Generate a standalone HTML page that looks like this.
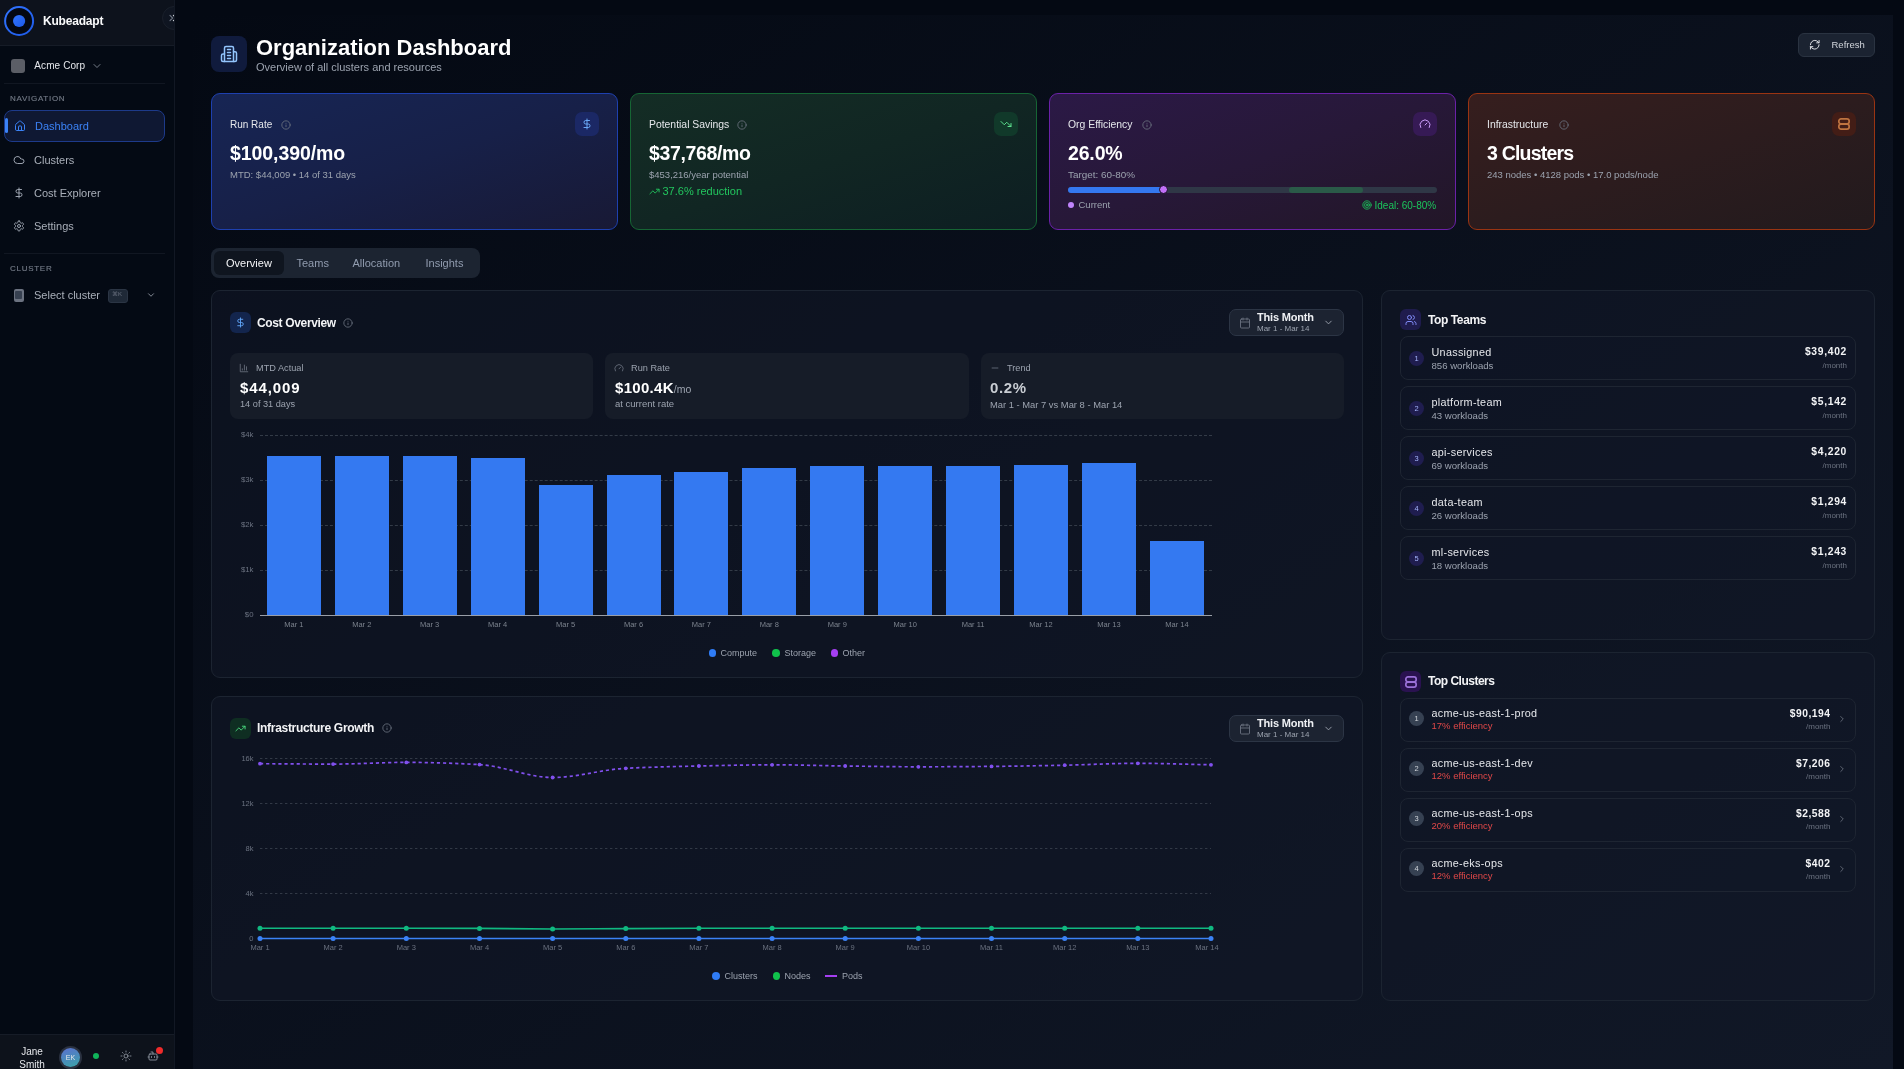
<!DOCTYPE html>
<html><head><meta charset="utf-8">
<style>
*{box-sizing:border-box;margin:0;padding:0}
html,body{width:1904px;height:1069px;overflow:hidden;background:#040913;font-family:"Liberation Sans",sans-serif;color:#f3f4f6}
.a{position:absolute}
.t{position:absolute;white-space:nowrap;line-height:1}
#wrap{position:absolute;left:0;top:0;width:1904px;height:1069px;will-change:transform}
svg.i{position:absolute;fill:none;stroke:currentColor;stroke-width:2;stroke-linecap:round;stroke-linejoin:round}
#sb{position:absolute;left:0;top:0;width:175px;height:1069px;background:#040a14;border-right:1px solid #121824;overflow:hidden;z-index:2}
#main{position:absolute;left:193px;top:15px;width:1700px;height:1054px;background:linear-gradient(to bottom right,#040913,#111827)}
.card{position:absolute;top:93px;width:407px;height:137px;border-radius:9px;border:1px solid}
.ibox{position:absolute;width:24px;height:24px;border-radius:7px}
.panel{position:absolute;background:rgba(17,24,39,0.5);border:1px solid #1c2431;border-radius:9px}
.sbox{position:absolute;top:353px;height:66px;background:#161c28;border-radius:8px}
.row{position:absolute;left:1400px;width:456px;height:44px;border:1px solid #1e2532;border-radius:8px;background:rgba(17,24,39,0.3)}
</style></head><body><div id="wrap">

<!-- SIDEBAR -->
<div id="sb">
  <div class="a" style="left:0;top:0;width:174px;height:46px;background:#0d121c;border-bottom:1px solid #161c27"></div>
  <svg class="a" style="left:0;top:0;width:40px;height:42px" viewBox="0 0 40 42"><defs><linearGradient id="lg" x1="0" y1="0" x2="1" y2="1"><stop offset="0" stop-color="#3274ff"/><stop offset="1" stop-color="#1d5ae8"/></linearGradient></defs><circle cx="19.1" cy="21" r="14" fill="#040812" stroke="url(#lg)" stroke-width="2"/><circle cx="19.1" cy="21" r="6.1" fill="url(#lg)"/></svg>
  <div class="t" style="left:43px;top:15px;font-size:12px;font-weight:700;letter-spacing:-0.2px;color:#f9fafb">Kubeadapt</div>
  <div class="a" style="left:162px;top:6px;width:24px;height:24px;border-radius:50%;background:#0f1521;border:1px solid #1a202b"></div>
  <svg class="a" style="left:160px;top:0;width:15px;height:35px" viewBox="160 0 15 35"><path d="M170 15.4 L172.6 18 L170 20.6" fill="none" stroke="#6b7280" stroke-width="1.2" stroke-linecap="round" stroke-linejoin="round"/><circle cx="173.6" cy="15.6" r="0.8" fill="#c8ccd2"/><circle cx="173.6" cy="20.5" r="0.8" fill="#c8ccd2"/></svg>
  <!-- org -->
  <div class="a" style="left:10.5px;top:58.5px;width:14px;height:14px;border-radius:3px;background:#5b5e66"></div>
  <div class="t" style="left:34.3px;top:61.3px;font-size:10px;letter-spacing:0.1px;color:#e5e7eb">Acme Corp</div>
  <svg class="i" style="left:90.7px;top:60.2px;width:12px;height:12px;color:#9ca3af;stroke-width:1.5" viewBox="0 0 24 24"><path d="m6 9 6 6 6-6"/></svg>
  <div class="a" style="left:4px;top:83px;width:161px;height:1px;background:#111722"></div>
  <div class="t" style="left:10px;top:95px;font-size:8px;font-weight:400;letter-spacing:0.72px;color:#737a86;-webkit-text-stroke:0.15px #737a86">NAVIGATION</div>
  <!-- nav -->
  <div class="a" style="left:4px;top:110px;width:161px;height:32px;border-radius:8px;background:#0f1833;border:1px solid #1d3a8a"></div>
  <div class="a" style="left:5px;top:118px;width:3px;height:15px;border-radius:2px;background:#3b82f6"></div>
  <svg class="i" style="left:13.5px;top:120px;width:12px;height:12px;color:#3b82f6" viewBox="0 0 24 24"><path d="M15 21v-8a1 1 0 0 0-1-1h-4a1 1 0 0 0-1 1v8"/><path d="M3 10a2 2 0 0 1 .709-1.528l7-5.999a2 2 0 0 1 2.582 0l7 5.999A2 2 0 0 1 21 10v9a2 2 0 0 1-2 2H5a2 2 0 0 1-2-2z"/></svg>
  <div class="t" style="left:35px;top:121px;font-size:11px;color:#3b82f6">Dashboard</div>
  <svg class="i" style="left:13px;top:154px;width:12px;height:12px;color:#9ca3af" viewBox="0 0 24 24"><path d="M17.5 19H9a7 7 0 1 1 6.71-9h1.79a4.5 4.5 0 1 1 0 9Z"/></svg>
  <div class="t" style="left:34px;top:155px;font-size:11px;color:#a9afb9">Clusters</div>
  <svg class="i" style="left:13px;top:187px;width:12px;height:12px;color:#9ca3af" viewBox="0 0 24 24"><line x1="12" x2="12" y1="2" y2="22"/><path d="M17 5H9.5a3.5 3.5 0 0 0 0 7h5a3.5 3.5 0 0 1 0 7H6"/></svg>
  <div class="t" style="left:34px;top:188px;font-size:11px;color:#a9afb9">Cost Explorer</div>
  <svg class="i" style="left:13px;top:220px;width:12px;height:12px;color:#9ca3af" viewBox="0 0 24 24"><path d="M12.22 2h-.44a2 2 0 0 0-2 2v.18a2 2 0 0 1-1 1.73l-.43.25a2 2 0 0 1-2 0l-.15-.08a2 2 0 0 0-2.73.73l-.22.38a2 2 0 0 0 .73 2.730l.15.1a2 2 0 0 1 1 1.72v.51a2 2 0 0 1-1 1.74l-.15.09a2 2 0 0 0-.73 2.73l.22.38a2 2 0 0 0 2.73.73l.15-.08a2 2 0 0 1 2 0l.43.25a2 2 0 0 1 1 1.73V20a2 2 0 0 0 2 2h.44a2 2 0 0 0 2-2v-.18a2 2 0 0 1 1-1.73l.43-.25a2 2 0 0 1 2 0l.15.08a2 2 0 0 0 2.73-.73l.22-.39a2 2 0 0 0-.73-2.73l-.15-.08a2 2 0 0 1-1-1.740v-.5a2 2 0 0 1 1-1.74l.15-.09a2 2 0 0 0 .73-2.73l-.22-.38a2 2 0 0 0-2.73-.73l-.15.08a2 2 0 0 1-2 0l-.43-.25a2 2 0 0 1-1-1.73V4a2 2 0 0 0-2-2z"/><circle cx="12" cy="12" r="3"/></svg>
  <div class="t" style="left:34px;top:221px;font-size:11px;color:#a9afb9">Settings</div>
  <div class="a" style="left:4px;top:253px;width:161px;height:1px;background:#111722"></div>
  <div class="t" style="left:10px;top:265px;font-size:8px;font-weight:400;letter-spacing:0.72px;color:#737a86;-webkit-text-stroke:0.15px #737a86">CLUSTER</div>
  <div class="a" style="left:13.5px;top:289px;width:10px;height:13px;border-radius:2px;background:#6b7280"></div>
  <div class="a" style="left:15px;top:291px;width:7px;height:8px;border-radius:1px;background:#374151"></div>
  <div class="t" style="left:34px;top:290px;font-size:11px;color:#a9afb9">Select cluster</div>
  <div class="a" style="left:108px;top:288.5px;width:20px;height:14px;border-radius:3px;background:#1f2937;border:1px solid #2b3544"></div>
  <div class="t" style="left:112px;top:291px;font-size:6px;color:#6b7280">&#8984;K</div>
  <svg class="i" style="left:146px;top:290px;width:10px;height:10px;color:#9ca3af" viewBox="0 0 24 24"><path d="m6 9 6 6 6-6"/></svg>
  <!-- bottom -->
  <div class="a" style="left:0;top:1034px;width:174px;height:35px;background:#0d121b;border-top:1px solid #161c27"></div>
  <div class="t" style="left:20px;top:1047.3px;font-size:10px;color:#e5e7eb;text-align:center;width:24px">Jane</div>
  <div class="t" style="left:14px;top:1060.3px;font-size:10px;color:#e5e7eb;text-align:center;width:36px">Smith</div>
  <div class="a" style="left:59px;top:1046px;width:23px;height:23px;border-radius:50%;background:#2a3140"></div>
  <div class="a" style="left:61px;top:1048px;width:19px;height:19px;border-radius:50%;background:linear-gradient(160deg,#5b6fd0,#3aa5a8);"></div>
  <div class="t" style="left:61px;top:1054px;width:19px;text-align:center;font-size:7px;color:#e5e7eb">EK</div>
  <div class="a" style="left:93px;top:1053px;width:6px;height:6px;border-radius:50%;background:#10b45a"></div>
  <svg class="i" style="left:120px;top:1050px;width:12px;height:12px;color:#9ca3af;stroke-width:1.6" viewBox="0 0 24 24"><circle cx="12" cy="12" r="4"/><path d="M12 2v2"/><path d="M12 20v2"/><path d="m4.93 4.93 1.41 1.41"/><path d="m17.66 17.66 1.41 1.41"/><path d="M2 12h2"/><path d="M20 12h2"/><path d="m6.34 17.66-1.41 1.41"/><path d="m19.07 4.93-1.41 1.41"/></svg>
  <svg class="i" style="left:147px;top:1050px;width:12px;height:12px;color:#9ca3af;stroke-width:1.6" viewBox="0 0 24 24"><path d="M12 8V4H8"/><rect width="16" height="12" x="4" y="8" rx="2"/><path d="M2 14h2"/><path d="M20 14h2"/><path d="M15 13v2"/><path d="M9 13v2"/></svg>
  <div class="a" style="left:155.5px;top:1046.5px;width:7px;height:7px;border-radius:50%;background:#ef2b2b"></div>
</div>

<div id="main"></div>

<!-- HEADER -->
<div class="a" style="left:211px;top:36px;width:36px;height:36px;border-radius:8px;background:#101b3d"></div>
<svg class="i" style="left:220px;top:45px;width:18px;height:18px;color:#93c5fd" viewBox="0 0 24 24"><path d="M6 22V4a2 2 0 0 1 2-2h8a2 2 0 0 1 2 2v18Z"/><path d="M6 12H4a2 2 0 0 0-2 2v6a2 2 0 0 0 2 2h2"/><path d="M18 9h2a2 2 0 0 1 2 2v9a2 2 0 0 1-2 2h-2"/><path d="M10 6h4"/><path d="M10 10h4"/><path d="M10 14h4"/><path d="M10 18h4"/></svg>
<div class="t" style="left:256px;top:37px;font-size:22px;font-weight:700;color:#fff">Organization Dashboard</div>
<div class="t" style="left:256px;top:62px;font-size:11px;color:#9ca3af">Overview of all clusters and resources</div>
<div class="a" style="left:1798px;top:33px;width:77px;height:24px;border-radius:6px;background:#1b2331;border:1px solid #2a3341"></div>
<svg class="i" style="left:1808.5px;top:39.3px;width:11.5px;height:11.5px;color:#e5e7eb" viewBox="0 0 24 24"><path d="M3 12a9 9 0 0 1 9-9 9.75 9.75 0 0 1 6.74 2.74L21 8"/><path d="M21 3v5h-5"/><path d="M21 12a9 9 0 0 1-9 9 9.75 9.75 0 0 1-6.74-2.74L3 16"/><path d="M8 16H3v5"/></svg>
<div class="t" style="left:1831.5px;top:40.2px;font-size:9.5px;color:#d1d5db">Refresh</div>

<!-- STAT CARDS -->
<div class="card" style="left:211px;border-color:#1e40af;background:linear-gradient(to bottom right,#172554 0%,#172048 50%,#181935 100%)"></div>
<div class="card" style="left:630px;border-color:#166534;background:linear-gradient(to bottom right,#142d25 0%,#112623 50%,#0d1e22 100%)"></div>
<div class="card" style="left:1049px;border-color:#6b21a8;background:linear-gradient(to bottom right,#2b1946 0%,#271838 50%,#221627 100%)"></div>
<div class="card" style="left:1468px;border-color:#9a3412;background:linear-gradient(to bottom right,#361e1e 0%,#2c1c1e 50%,#221a1d 100%)"></div>

<!-- card1 -->
<div class="t" style="left:230px;top:120.2px;font-size:10px;color:#e5e7eb">Run Rate</div>
<svg class="i" style="left:280.5px;top:119.5px;width:10px;height:10px;color:#6b7280;stroke-width:2" viewBox="0 0 24 24"><circle cx="12" cy="12" r="10"/><path d="M12 16v-4"/><path d="M12 8h.01"/></svg>
<div class="ibox" style="left:575px;top:112px;background:#1b2865"></div>
<svg class="i" style="left:581px;top:118px;width:12px;height:12px;color:#6aa8f7" viewBox="0 0 24 24"><line x1="12" x2="12" y1="2" y2="22"/><path d="M17 5H9.5a3.5 3.5 0 0 0 0 7h5a3.5 3.5 0 0 1 0 7H6"/></svg>
<div class="t" style="left:230px;top:144.2px;font-size:19.5px;font-weight:700;letter-spacing:-0.08px;color:#fff">$100,390/mo</div>
<div class="t" style="left:230px;top:170.2px;font-size:9.5px;color:#9ca3af">MTD: $44,009 &#8226; 14 of 31 days</div>
<!-- card2 -->
<div class="t" style="left:649px;top:120.2px;font-size:10.4px;color:#e5e7eb">Potential Savings</div>
<svg class="i" style="left:737px;top:119.5px;width:10px;height:10px;color:#6b7280;stroke-width:2" viewBox="0 0 24 24"><circle cx="12" cy="12" r="10"/><path d="M12 16v-4"/><path d="M12 8h.01"/></svg>
<div class="ibox" style="left:994px;top:112px;background:#11392a"></div>
<svg class="i" style="left:1000px;top:118px;width:12px;height:12px;color:#5ee08f" viewBox="0 0 24 24"><polyline points="22 17 13.5 8.5 8.5 13.5 2 7"/><polyline points="16 17 22 17 22 11"/></svg>
<div class="t" style="left:649px;top:144.2px;font-size:19.5px;font-weight:700;letter-spacing:-0.36px;color:#fff">$37,768/mo</div>
<div class="t" style="left:649px;top:170.2px;font-size:9.5px;color:#9ca3af">$453,216/year potential</div>
<svg class="i" style="left:649px;top:186px;width:11px;height:11px;color:#22c55e" viewBox="0 0 24 24"><polyline points="22 7 13.5 15.5 8.5 10.5 2 17"/><polyline points="16 7 22 7 22 13"/></svg>
<div class="t" style="left:662.5px;top:186.1px;font-size:11px;color:#22c55e">37.6% reduction</div>
<!-- card3 -->
<div class="t" style="left:1068px;top:120.2px;font-size:10.4px;color:#e5e7eb">Org Efficiency</div>
<svg class="i" style="left:1142px;top:119.5px;width:10px;height:10px;color:#6b7280;stroke-width:2" viewBox="0 0 24 24"><circle cx="12" cy="12" r="10"/><path d="M12 16v-4"/><path d="M12 8h.01"/></svg>
<div class="ibox" style="left:1413px;top:112px;background:#361a55"></div>
<svg class="i" style="left:1419px;top:118px;width:12px;height:12px;color:#c99af7" viewBox="0 0 24 24"><path d="m12 14 4-4"/><path d="M3.34 19a10 10 0 1 1 17.32 0"/></svg>
<div class="t" style="left:1068px;top:144.2px;font-size:19.5px;font-weight:700;letter-spacing:-0.16px;color:#fff">26.0%</div>
<div class="t" style="left:1068px;top:170.2px;font-size:9.9px;color:#9ca3af">Target: 60-80%</div>
<div class="a" style="left:1068px;top:187px;width:369px;height:6px;border-radius:3px;background:#2f3746"></div>
<div class="a" style="left:1289px;top:187px;width:74px;height:6px;border-radius:3px;background:#2a5a48"></div>
<div class="a" style="left:1068px;top:187px;width:95px;height:6px;border-radius:3px;background:#3478f0"></div>
<div class="a" style="left:1158.8px;top:185.4px;width:9px;height:9px;border-radius:50%;background:#c270f7;border:1px solid #140b20"></div>
<div class="a" style="left:1068px;top:202px;width:6px;height:6px;border-radius:50%;background:#c084fc"></div>
<div class="t" style="left:1078.5px;top:200.2px;font-size:9.5px;color:#9ca3af">Current</div>
<svg class="i" style="left:1362.2px;top:200.2px;width:10px;height:10px;color:#1bc45c" viewBox="0 0 24 24"><circle cx="12" cy="12" r="10"/><circle cx="12" cy="12" r="6"/><circle cx="12" cy="12" r="2"/></svg>
<div class="t" style="left:1374.5px;top:200.8px;font-size:10px;color:#1bc45c">Ideal: 60-80%</div>
<!-- card4 -->
<div class="t" style="left:1487px;top:120.2px;font-size:10.4px;color:#e5e7eb">Infrastructure</div>
<svg class="i" style="left:1559px;top:119.5px;width:10px;height:10px;color:#6b7280;stroke-width:2" viewBox="0 0 24 24"><circle cx="12" cy="12" r="10"/><path d="M12 16v-4"/><path d="M12 8h.01"/></svg>
<div class="ibox" style="left:1832px;top:112px;background:#431d16"></div>
<svg class="i" style="left:1838px;top:118px;width:12px;height:12px;color:#bf7440;stroke-width:1.7" viewBox="0 0 12 12"><rect x="0.85" y="0.85" width="10.3" height="5" rx="2.2"/><rect x="0.85" y="6.15" width="10.3" height="5" rx="2.2"/></svg>
<div class="t" style="left:1487px;top:144.2px;font-size:19.5px;font-weight:700;color:#fff;letter-spacing:-0.8px">3 Clusters</div>
<div class="t" style="left:1487px;top:170.2px;font-size:9.5px;color:#9ca3af">243 nodes &#8226; 4128 pods &#8226; 17.0 pods/node</div>

<!-- TABS -->
<div class="a" style="left:211px;top:248px;width:269px;height:30px;border-radius:8px;background:#1c2431"></div>
<div class="a" style="left:214px;top:251px;width:70px;height:24px;border-radius:6px;background:#0f151f"></div>
<div class="t" style="left:226px;top:258px;font-size:11px;color:#f3f4f6">Overview</div>
<div class="t" style="left:296.5px;top:258px;font-size:11px;color:#919caf">Teams</div>
<div class="t" style="left:352.5px;top:258px;font-size:11px;color:#919caf">Allocation</div>
<div class="t" style="left:425.5px;top:258px;font-size:11px;color:#919caf">Insights</div>

<!-- COST OVERVIEW -->
<div class="panel" style="left:211px;top:290px;width:1152px;height:388px"></div>
<div class="a" style="left:230px;top:312px;width:21px;height:21px;border-radius:6px;background:#13254d"></div>
<svg class="i" style="left:235px;top:317px;width:11px;height:11px;color:#60a5fa" viewBox="0 0 24 24"><line x1="12" x2="12" y1="2" y2="22"/><path d="M17 5H9.5a3.5 3.5 0 0 0 0 7h5a3.5 3.5 0 0 1 0 7H6"/></svg>
<div class="t" style="left:257px;top:316.8px;font-size:12px;font-weight:700;letter-spacing:-0.35px;color:#f3f4f6">Cost Overview</div>
<svg class="i" style="left:343px;top:317.5px;width:10px;height:10px;color:#6b7280" viewBox="0 0 24 24"><circle cx="12" cy="12" r="10"/><path d="M12 16v-4"/><path d="M12 8h.01"/></svg><div class="a" style="left:1229px;top:309px;width:115px;height:27px;border-radius:7px;background:#1c2331;border:1px solid #2c3545"></div>
<svg class="i" style="left:1239px;top:317px;width:12px;height:12px;color:#6b7280;stroke-width:1.8" viewBox="0 0 24 24"><rect width="18" height="18" x="3" y="4" rx="2" ry="2"/><line x1="16" x2="16" y1="2" y2="6"/><line x1="8" x2="8" y1="2" y2="6"/><line x1="3" x2="21" y1="10" y2="10"/></svg>
<div class="t" style="left:1257px;top:312.2px;font-size:11px;font-weight:700;letter-spacing:-0.2px;color:#eef0f3">This Month</div>
<div class="t" style="left:1257px;top:324.5px;font-size:8px;color:#9ca3af">Mar 1 - Mar 14</div>
<svg class="i" style="left:1322.5px;top:317px;width:11px;height:11px;color:#9ca3af" viewBox="0 0 24 24"><path d="m6 9 6 6 6-6"/></svg>

<div class="sbox" style="left:230px;width:363px"></div>
<div class="sbox" style="left:605px;width:364px"></div>
<div class="sbox" style="left:981px;width:363px"></div>
<svg class="i" style="left:239px;top:362.5px;width:10px;height:10px;color:#6b7280" viewBox="0 0 24 24"><path d="M3 3v18h18"/><path d="M18 17V9"/><path d="M13 17V5"/><path d="M8 17v-3"/></svg>
<div class="t" style="left:256px;top:363.5px;font-size:9.2px;color:#9ca3af">MTD Actual</div>
<div class="t" style="left:240px;top:380.2px;font-size:15px;font-weight:700;letter-spacing:0.9px;color:#fff">$44,009</div>
<div class="t" style="left:240px;top:399.5px;font-size:9.2px;color:#9ca3af">14 of 31 days</div>
<svg class="i" style="left:614px;top:362.5px;width:10px;height:10px;color:#6b7280" viewBox="0 0 24 24"><path d="m12 14 4-4"/><path d="M3.34 19a10 10 0 1 1 17.32 0"/></svg>
<div class="t" style="left:631px;top:363.5px;font-size:9.2px;color:#9ca3af">Run Rate</div>
<div class="t" style="left:615px;top:380.2px;font-size:15px;font-weight:700;letter-spacing:0.3px;color:#fff">$100.4K<span style="font-size:10.5px;font-weight:400;color:#9ca3af;letter-spacing:0">/mo</span></div>
<div class="t" style="left:615px;top:398.7px;font-size:9.5px;color:#9ca3af">at current rate</div>
<svg class="i" style="left:990px;top:362.5px;width:10px;height:10px;color:#6b7280" viewBox="0 0 24 24"><path d="M5 12h14"/></svg>
<div class="t" style="left:1007px;top:363.5px;font-size:9.2px;color:#9ca3af">Trend</div>
<div class="t" style="left:990px;top:380.2px;font-size:15px;font-weight:700;letter-spacing:0.6px;color:#c9cdd3">0.2%</div>
<div class="t" style="left:990px;top:399.5px;font-size:9.4px;color:#9ca3af">Mar 1 - Mar 7 vs Mar 8 - Mar 14</div>
<div class="a" style="left:260px;top:435px;width:952px;height:0;border-top:1px dashed #333b47"></div>
<div class="a" style="left:260px;top:480px;width:952px;height:0;border-top:1px dashed #333b47"></div>
<div class="a" style="left:260px;top:525px;width:952px;height:0;border-top:1px dashed #333b47"></div>
<div class="a" style="left:260px;top:570px;width:952px;height:0;border-top:1px dashed #333b47"></div>
<div class="t" style="left:203px;top:431.4px;width:50.5px;text-align:right;font-size:7.8px;color:#6b7280">$4k</div>
<div class="t" style="left:203px;top:476.4px;width:50.5px;text-align:right;font-size:7.8px;color:#6b7280">$3k</div>
<div class="t" style="left:203px;top:521.4px;width:50.5px;text-align:right;font-size:7.8px;color:#6b7280">$2k</div>
<div class="t" style="left:203px;top:566.4px;width:50.5px;text-align:right;font-size:7.8px;color:#6b7280">$1k</div>
<div class="t" style="left:203px;top:611.4px;width:50.5px;text-align:right;font-size:7.8px;color:#6b7280">$0</div>
<div class="a" style="left:266.9px;top:456px;width:54px;height:159px;background:#3479f1"></div>
<div class="t" style="left:243.9px;top:620.8px;width:100px;text-align:center;font-size:7.5px;color:#7c838e">Mar 1</div>
<div class="a" style="left:334.8px;top:455.7px;width:54px;height:159.3px;background:#3479f1"></div>
<div class="t" style="left:311.8px;top:620.8px;width:100px;text-align:center;font-size:7.5px;color:#7c838e">Mar 2</div>
<div class="a" style="left:402.7px;top:455.5px;width:54px;height:159.5px;background:#3479f1"></div>
<div class="t" style="left:379.7px;top:620.8px;width:100px;text-align:center;font-size:7.5px;color:#7c838e">Mar 3</div>
<div class="a" style="left:470.7px;top:458px;width:54px;height:157px;background:#3479f1"></div>
<div class="t" style="left:447.7px;top:620.8px;width:100px;text-align:center;font-size:7.5px;color:#7c838e">Mar 4</div>
<div class="a" style="left:538.6px;top:485.2px;width:54px;height:129.8px;background:#3479f1"></div>
<div class="t" style="left:515.6px;top:620.8px;width:100px;text-align:center;font-size:7.5px;color:#7c838e">Mar 5</div>
<div class="a" style="left:606.5px;top:474.5px;width:54px;height:140.5px;background:#3479f1"></div>
<div class="t" style="left:583.5px;top:620.8px;width:100px;text-align:center;font-size:7.5px;color:#7c838e">Mar 6</div>
<div class="a" style="left:674.4px;top:471.6px;width:54px;height:143.39999999999998px;background:#3479f1"></div>
<div class="t" style="left:651.4px;top:620.8px;width:100px;text-align:center;font-size:7.5px;color:#7c838e">Mar 7</div>
<div class="a" style="left:742.3px;top:468.2px;width:54px;height:146.8px;background:#3479f1"></div>
<div class="t" style="left:719.3px;top:620.8px;width:100px;text-align:center;font-size:7.5px;color:#7c838e">Mar 8</div>
<div class="a" style="left:810.3px;top:466.4px;width:54px;height:148.60000000000002px;background:#3479f1"></div>
<div class="t" style="left:787.3px;top:620.8px;width:100px;text-align:center;font-size:7.5px;color:#7c838e">Mar 9</div>
<div class="a" style="left:878.2px;top:465.5px;width:54px;height:149.5px;background:#3479f1"></div>
<div class="t" style="left:855.2px;top:620.8px;width:100px;text-align:center;font-size:7.5px;color:#7c838e">Mar 10</div>
<div class="a" style="left:946.1px;top:466.4px;width:54px;height:148.60000000000002px;background:#3479f1"></div>
<div class="t" style="left:923.1px;top:620.8px;width:100px;text-align:center;font-size:7.5px;color:#7c838e">Mar 11</div>
<div class="a" style="left:1014.0px;top:465.2px;width:54px;height:149.8px;background:#3479f1"></div>
<div class="t" style="left:991.0px;top:620.8px;width:100px;text-align:center;font-size:7.5px;color:#7c838e">Mar 12</div>
<div class="a" style="left:1081.9px;top:462.6px;width:54px;height:152.39999999999998px;background:#3479f1"></div>
<div class="t" style="left:1058.9px;top:620.8px;width:100px;text-align:center;font-size:7.5px;color:#7c838e">Mar 13</div>
<div class="a" style="left:1149.9px;top:540.9px;width:54px;height:74.10000000000002px;background:#3479f1"></div>
<div class="t" style="left:1126.9px;top:620.8px;width:100px;text-align:center;font-size:7.5px;color:#7c838e">Mar 14</div>
<div class="a" style="left:260px;top:614.5px;width:952px;height:1px;background:rgba(200,205,212,0.75)"></div>
<div class="a" style="left:708.6px;top:649.4px;width:7.6px;height:7.6px;border-radius:50%;background:#2f7cf6"></div>
<div class="t" style="left:720.5px;top:649.2px;font-size:9px;color:#9ca3af">Compute</div>
<div class="a" style="left:772.4px;top:649.4px;width:7.6px;height:7.6px;border-radius:50%;background:#10c24b"></div>
<div class="t" style="left:784.5px;top:649.2px;font-size:9px;color:#9ca3af">Storage</div>
<div class="a" style="left:830.7px;top:649.4px;width:7.6px;height:7.6px;border-radius:50%;background:#a53ff2"></div>
<div class="t" style="left:842.5px;top:649.2px;font-size:9px;color:#9ca3af">Other</div>

<!-- INFRA GROWTH -->
<div class="panel" style="left:211px;top:696px;width:1152px;height:305px"></div>
<div class="a" style="left:230px;top:718px;width:21px;height:21px;border-radius:6px;background:#0f2e22"></div>
<svg class="i" style="left:235px;top:723px;width:11px;height:11px;color:#4ade80" viewBox="0 0 24 24"><polyline points="22 7 13.5 15.5 8.5 10.5 2 17"/><polyline points="16 7 22 7 22 13"/></svg>
<div class="t" style="left:257px;top:722.2px;font-size:12px;font-weight:700;letter-spacing:-0.3px;color:#f3f4f6">Infrastructure Growth</div>
<svg class="i" style="left:382px;top:723px;width:10px;height:10px;color:#6b7280" viewBox="0 0 24 24"><circle cx="12" cy="12" r="10"/><path d="M12 16v-4"/><path d="M12 8h.01"/></svg><div class="a" style="left:1229px;top:715px;width:115px;height:27px;border-radius:7px;background:#1c2331;border:1px solid #2c3545"></div>
<svg class="i" style="left:1239px;top:723px;width:12px;height:12px;color:#6b7280;stroke-width:1.8" viewBox="0 0 24 24"><rect width="18" height="18" x="3" y="4" rx="2" ry="2"/><line x1="16" x2="16" y1="2" y2="6"/><line x1="8" x2="8" y1="2" y2="6"/><line x1="3" x2="21" y1="10" y2="10"/></svg>
<div class="t" style="left:1257px;top:718.2px;font-size:11px;font-weight:700;letter-spacing:-0.2px;color:#eef0f3">This Month</div>
<div class="t" style="left:1257px;top:730.5px;font-size:8px;color:#9ca3af">Mar 1 - Mar 14</div>
<svg class="i" style="left:1322.5px;top:723px;width:11px;height:11px;color:#9ca3af" viewBox="0 0 24 24"><path d="m6 9 6 6 6-6"/></svg>
<svg class="a" style="left:0;top:0;width:1904px;height:1069px;overflow:visible" viewBox="0 0 1904 1069">
<line x1="260" x2="1211" y1="758.5" y2="758.5" stroke="#323946" stroke-width="1" stroke-dasharray="2.4 2.6"/>
<line x1="260" x2="1211" y1="803.5" y2="803.5" stroke="#323946" stroke-width="1" stroke-dasharray="2.4 2.6"/>
<line x1="260" x2="1211" y1="848.5" y2="848.5" stroke="#323946" stroke-width="1" stroke-dasharray="2.4 2.6"/>
<line x1="260" x2="1211" y1="893.5" y2="893.5" stroke="#323946" stroke-width="1" stroke-dasharray="2.4 2.6"/>
<path d="M260.0,763.7 C284.4,763.8 308.8,764.1 333.1,764.1 C357.5,764.1 381.9,762.4 406.3,762.4 C430.7,762.4 455.1,763.3 479.5,764.6 C503.8,765.9 528.2,777.5 552.6,777.5 C577.0,777.5 601.4,769.5 625.8,768.3 C650.1,767.1 674.5,766.5 698.9,766.0 C723.3,765.5 747.7,764.8 772.1,764.8 C796.4,764.8 820.8,765.7 845.2,766.0 C869.6,766.3 894.0,766.8 918.4,766.8 C942.7,766.8 967.1,766.6 991.5,766.4 C1015.9,766.2 1040.3,765.7 1064.7,765.2 C1089.0,764.7 1113.4,763.3 1137.8,763.3 C1162.2,763.3 1186.6,764.3 1211.0,764.8" fill="none" stroke="#8150ee" stroke-width="1.7" stroke-dasharray="3.2 2.9"/>
<path d="M260.0,928.2 C284.4,928.2 308.8,928.2 333.1,928.2 C357.5,928.2 381.9,928.2 406.3,928.2 C430.7,928.2 455.1,928.3 479.5,928.4 C503.8,928.5 528.2,929.0 552.6,929.0 C577.0,929.0 601.4,928.7 625.8,928.6 C650.1,928.5 674.5,928.2 698.9,928.2 C723.3,928.2 747.7,928.2 772.1,928.2 C796.4,928.2 820.8,928.2 845.2,928.2 C869.6,928.2 894.0,928.2 918.4,928.2 C942.7,928.2 967.1,928.2 991.5,928.2 C1015.9,928.2 1040.3,928.2 1064.7,928.2 C1089.0,928.2 1113.4,928.2 1137.8,928.2 C1162.2,928.2 1186.6,928.2 1211.0,928.2" fill="none" stroke="#10b981" stroke-width="1.6"/>
<path d="M260.0,938.5 C284.4,938.5 308.8,938.5 333.1,938.5 C357.5,938.5 381.9,938.5 406.3,938.5 C430.7,938.5 455.1,938.5 479.5,938.5 C503.8,938.5 528.2,938.5 552.6,938.5 C577.0,938.5 601.4,938.5 625.8,938.5 C650.1,938.5 674.5,938.5 698.9,938.5 C723.3,938.5 747.7,938.5 772.1,938.5 C796.4,938.5 820.8,938.5 845.2,938.5 C869.6,938.5 894.0,938.5 918.4,938.5 C942.7,938.5 967.1,938.5 991.5,938.5 C1015.9,938.5 1040.3,938.5 1064.7,938.5 C1089.0,938.5 1113.4,938.5 1137.8,938.5 C1162.2,938.5 1186.6,938.5 1211.0,938.5" fill="none" stroke="#3b82f6" stroke-width="1.6"/>
<circle cx="260.0" cy="763.7" r="1.9" fill="#8150ee"/><circle cx="260.0" cy="928.2" r="2.5" fill="#10b981"/><circle cx="260.0" cy="938.5" r="2.5" fill="#3b82f6"/>
<circle cx="333.1" cy="764.1" r="1.9" fill="#8150ee"/><circle cx="333.1" cy="928.2" r="2.5" fill="#10b981"/><circle cx="333.1" cy="938.5" r="2.5" fill="#3b82f6"/>
<circle cx="406.3" cy="762.4" r="1.9" fill="#8150ee"/><circle cx="406.3" cy="928.2" r="2.5" fill="#10b981"/><circle cx="406.3" cy="938.5" r="2.5" fill="#3b82f6"/>
<circle cx="479.5" cy="764.6" r="1.9" fill="#8150ee"/><circle cx="479.5" cy="928.4" r="2.5" fill="#10b981"/><circle cx="479.5" cy="938.5" r="2.5" fill="#3b82f6"/>
<circle cx="552.6" cy="777.5" r="1.9" fill="#8150ee"/><circle cx="552.6" cy="929.0" r="2.5" fill="#10b981"/><circle cx="552.6" cy="938.5" r="2.5" fill="#3b82f6"/>
<circle cx="625.8" cy="768.3" r="1.9" fill="#8150ee"/><circle cx="625.8" cy="928.6" r="2.5" fill="#10b981"/><circle cx="625.8" cy="938.5" r="2.5" fill="#3b82f6"/>
<circle cx="698.9" cy="766" r="1.9" fill="#8150ee"/><circle cx="698.9" cy="928.2" r="2.5" fill="#10b981"/><circle cx="698.9" cy="938.5" r="2.5" fill="#3b82f6"/>
<circle cx="772.1" cy="764.8" r="1.9" fill="#8150ee"/><circle cx="772.1" cy="928.2" r="2.5" fill="#10b981"/><circle cx="772.1" cy="938.5" r="2.5" fill="#3b82f6"/>
<circle cx="845.2" cy="766" r="1.9" fill="#8150ee"/><circle cx="845.2" cy="928.2" r="2.5" fill="#10b981"/><circle cx="845.2" cy="938.5" r="2.5" fill="#3b82f6"/>
<circle cx="918.4" cy="766.8" r="1.9" fill="#8150ee"/><circle cx="918.4" cy="928.2" r="2.5" fill="#10b981"/><circle cx="918.4" cy="938.5" r="2.5" fill="#3b82f6"/>
<circle cx="991.5" cy="766.4" r="1.9" fill="#8150ee"/><circle cx="991.5" cy="928.2" r="2.5" fill="#10b981"/><circle cx="991.5" cy="938.5" r="2.5" fill="#3b82f6"/>
<circle cx="1064.7" cy="765.2" r="1.9" fill="#8150ee"/><circle cx="1064.7" cy="928.2" r="2.5" fill="#10b981"/><circle cx="1064.7" cy="938.5" r="2.5" fill="#3b82f6"/>
<circle cx="1137.8" cy="763.3" r="1.9" fill="#8150ee"/><circle cx="1137.8" cy="928.2" r="2.5" fill="#10b981"/><circle cx="1137.8" cy="938.5" r="2.5" fill="#3b82f6"/>
<circle cx="1211.0" cy="764.8" r="1.9" fill="#8150ee"/><circle cx="1211.0" cy="928.2" r="2.5" fill="#10b981"/><circle cx="1211.0" cy="938.5" r="2.5" fill="#3b82f6"/>
</svg>
<div class="t" style="left:203px;top:754.9px;width:50.5px;text-align:right;font-size:7.5px;color:#6b7280">16k</div>
<div class="t" style="left:203px;top:799.9px;width:50.5px;text-align:right;font-size:7.5px;color:#6b7280">12k</div>
<div class="t" style="left:203px;top:844.9px;width:50.5px;text-align:right;font-size:7.5px;color:#6b7280">8k</div>
<div class="t" style="left:203px;top:889.9px;width:50.5px;text-align:right;font-size:7.5px;color:#6b7280">4k</div>
<div class="t" style="left:203px;top:934.9px;width:50.5px;text-align:right;font-size:7.5px;color:#6b7280">0</div>
<div class="t" style="left:210.0px;top:943.8px;width:100px;text-align:center;font-size:7.5px;color:#6b7280">Mar 1</div>
<div class="t" style="left:283.1px;top:943.8px;width:100px;text-align:center;font-size:7.5px;color:#6b7280">Mar 2</div>
<div class="t" style="left:356.3px;top:943.8px;width:100px;text-align:center;font-size:7.5px;color:#6b7280">Mar 3</div>
<div class="t" style="left:429.5px;top:943.8px;width:100px;text-align:center;font-size:7.5px;color:#6b7280">Mar 4</div>
<div class="t" style="left:502.6px;top:943.8px;width:100px;text-align:center;font-size:7.5px;color:#6b7280">Mar 5</div>
<div class="t" style="left:575.8px;top:943.8px;width:100px;text-align:center;font-size:7.5px;color:#6b7280">Mar 6</div>
<div class="t" style="left:648.9px;top:943.8px;width:100px;text-align:center;font-size:7.5px;color:#6b7280">Mar 7</div>
<div class="t" style="left:722.1px;top:943.8px;width:100px;text-align:center;font-size:7.5px;color:#6b7280">Mar 8</div>
<div class="t" style="left:795.2px;top:943.8px;width:100px;text-align:center;font-size:7.5px;color:#6b7280">Mar 9</div>
<div class="t" style="left:868.4px;top:943.8px;width:100px;text-align:center;font-size:7.5px;color:#6b7280">Mar 10</div>
<div class="t" style="left:941.5px;top:943.8px;width:100px;text-align:center;font-size:7.5px;color:#6b7280">Mar 11</div>
<div class="t" style="left:1014.7px;top:943.8px;width:100px;text-align:center;font-size:7.5px;color:#6b7280">Mar 12</div>
<div class="t" style="left:1087.8px;top:943.8px;width:100px;text-align:center;font-size:7.5px;color:#6b7280">Mar 13</div>
<div class="t" style="left:1157.0px;top:943.8px;width:100px;text-align:center;font-size:7.5px;color:#6b7280">Mar 14</div>
<div class="a" style="left:711.8px;top:972.2px;width:8px;height:8px;border-radius:50%;background:#2f7cf6"></div>
<div class="t" style="left:724.4px;top:971.7px;font-size:9px;color:#9ca3af">Clusters</div>
<div class="a" style="left:772.6px;top:972.2px;width:7.6px;height:8px;border-radius:50%;background:#10c24b"></div>
<div class="t" style="left:784.6px;top:971.7px;font-size:9px;color:#9ca3af">Nodes</div>
<div class="a" style="left:825px;top:975px;width:12px;height:2px;background:#a53ff2"></div>
<div class="t" style="left:842.1px;top:971.7px;font-size:9px;color:#9ca3af">Pods</div>

<!-- TOP TEAMS -->
<div class="panel" style="left:1381px;top:290px;width:494px;height:350px"></div>
<div class="a" style="left:1400px;top:309px;width:21px;height:21px;border-radius:6px;background:#1f1c4d"></div>
<svg class="i" style="left:1404.5px;top:313.5px;width:12px;height:12px;color:#818cf8" viewBox="0 0 24 24"><path d="M16 21v-2a4 4 0 0 0-4-4H6a4 4 0 0 0-4 4v2"/><circle cx="9" cy="7" r="4"/><path d="M22 21v-2a4 4 0 0 0-3-3.87"/><path d="M16 3.13a4 4 0 0 1 0 7.75"/></svg>
<div class="t" style="left:1428px;top:313.7px;font-size:12px;font-weight:700;letter-spacing:-0.4px;color:#f3f4f6">Top Teams</div>
<div class="row" style="top:336px"></div>
<div class="a" style="left:1409px;top:350.5px;width:15px;height:15px;border-radius:50%;background:#1f1d4f"></div>
<div class="t" style="left:1409px;top:354.5px;width:15px;text-align:center;font-size:7.5px;color:#a5b4fc">1</div>
<div class="t" style="left:1431.5px;top:346.8px;font-size:10.8px;letter-spacing:0.3px;color:#e5e7eb">Unassigned</div>
<div class="t" style="left:1431.5px;top:360.9px;font-size:9.6px;color:#9ca3af">856 workloads</div>
<div class="t" style="left:1700px;top:347.2px;width:1147px;text-align:right;font-size:10.3px;font-weight:700;letter-spacing:0.7px;color:#f3f4f6;width:147px">$39,402</div>
<div class="t" style="left:1700px;top:361.5px;text-align:right;font-size:8px;color:#6b7280;width:147px">/month</div>
<div class="row" style="top:386px"></div>
<div class="a" style="left:1409px;top:400.5px;width:15px;height:15px;border-radius:50%;background:#1f1d4f"></div>
<div class="t" style="left:1409px;top:404.5px;width:15px;text-align:center;font-size:7.5px;color:#a5b4fc">2</div>
<div class="t" style="left:1431.5px;top:396.8px;font-size:10.8px;letter-spacing:0.3px;color:#e5e7eb">platform-team</div>
<div class="t" style="left:1431.5px;top:410.9px;font-size:9.6px;color:#9ca3af">43 workloads</div>
<div class="t" style="left:1700px;top:397.2px;width:1147px;text-align:right;font-size:10.3px;font-weight:700;letter-spacing:0.7px;color:#f3f4f6;width:147px">$5,142</div>
<div class="t" style="left:1700px;top:411.5px;text-align:right;font-size:8px;color:#6b7280;width:147px">/month</div>
<div class="row" style="top:436px"></div>
<div class="a" style="left:1409px;top:450.5px;width:15px;height:15px;border-radius:50%;background:#1f1d4f"></div>
<div class="t" style="left:1409px;top:454.5px;width:15px;text-align:center;font-size:7.5px;color:#a5b4fc">3</div>
<div class="t" style="left:1431.5px;top:446.8px;font-size:10.8px;letter-spacing:0.3px;color:#e5e7eb">api-services</div>
<div class="t" style="left:1431.5px;top:460.9px;font-size:9.6px;color:#9ca3af">69 workloads</div>
<div class="t" style="left:1700px;top:447.2px;width:1147px;text-align:right;font-size:10.3px;font-weight:700;letter-spacing:0.7px;color:#f3f4f6;width:147px">$4,220</div>
<div class="t" style="left:1700px;top:461.5px;text-align:right;font-size:8px;color:#6b7280;width:147px">/month</div>
<div class="row" style="top:486px"></div>
<div class="a" style="left:1409px;top:500.5px;width:15px;height:15px;border-radius:50%;background:#1f1d4f"></div>
<div class="t" style="left:1409px;top:504.5px;width:15px;text-align:center;font-size:7.5px;color:#a5b4fc">4</div>
<div class="t" style="left:1431.5px;top:496.8px;font-size:10.8px;letter-spacing:0.3px;color:#e5e7eb">data-team</div>
<div class="t" style="left:1431.5px;top:510.9px;font-size:9.6px;color:#9ca3af">26 workloads</div>
<div class="t" style="left:1700px;top:497.2px;width:1147px;text-align:right;font-size:10.3px;font-weight:700;letter-spacing:0.7px;color:#f3f4f6;width:147px">$1,294</div>
<div class="t" style="left:1700px;top:511.5px;text-align:right;font-size:8px;color:#6b7280;width:147px">/month</div>
<div class="row" style="top:536px"></div>
<div class="a" style="left:1409px;top:550.5px;width:15px;height:15px;border-radius:50%;background:#1f1d4f"></div>
<div class="t" style="left:1409px;top:554.5px;width:15px;text-align:center;font-size:7.5px;color:#a5b4fc">5</div>
<div class="t" style="left:1431.5px;top:546.8px;font-size:10.8px;letter-spacing:0.3px;color:#e5e7eb">ml-services</div>
<div class="t" style="left:1431.5px;top:560.9px;font-size:9.6px;color:#9ca3af">18 workloads</div>
<div class="t" style="left:1700px;top:547.2px;width:1147px;text-align:right;font-size:10.3px;font-weight:700;letter-spacing:0.7px;color:#f3f4f6;width:147px">$1,243</div>
<div class="t" style="left:1700px;top:561.5px;text-align:right;font-size:8px;color:#6b7280;width:147px">/month</div>

<!-- TOP CLUSTERS -->
<div class="panel" style="left:1381px;top:652px;width:494px;height:349px"></div>
<div class="a" style="left:1400px;top:671px;width:21px;height:21px;border-radius:6px;background:#2a1250"></div>
<svg class="i" style="left:1404.5px;top:675.5px;width:12px;height:12px;color:#9b70d8;stroke-width:1.7" viewBox="0 0 12 12"><rect x="0.85" y="0.85" width="10.3" height="5" rx="2.2"/><rect x="0.85" y="6.15" width="10.3" height="5" rx="2.2"/></svg>
<div class="t" style="left:1428px;top:674.9px;font-size:12px;font-weight:700;letter-spacing:-0.5px;color:#f3f4f6">Top Clusters</div>
<div class="row" style="top:697.5px"></div>
<div class="a" style="left:1409px;top:711.2px;width:15px;height:15px;border-radius:50%;background:#364152"></div>
<div class="t" style="left:1409px;top:715.2px;width:15px;text-align:center;font-size:7.5px;color:#d1d5db">1</div>
<div class="t" style="left:1431.5px;top:707.5px;font-size:10.8px;letter-spacing:0.3px;color:#e5e7eb">acme-us-east-1-prod</div>
<div class="t" style="left:1431.5px;top:721.1px;font-size:9.5px;color:#e04848">17% efficiency</div>
<div class="t" style="left:1683px;top:708.7px;text-align:right;font-size:10.3px;font-weight:700;letter-spacing:0.5px;color:#f3f4f6;width:147.5px">$90,194</div>
<div class="t" style="left:1683px;top:722.5px;text-align:right;font-size:8px;color:#6b7280;width:147.5px">/month</div>
<svg class="i" style="left:1837px;top:714.0px;width:10px;height:10px;color:#6b7280" viewBox="0 0 24 24"><path d="m9 18 6-6-6-6"/></svg>
<div class="row" style="top:747.5px"></div>
<div class="a" style="left:1409px;top:761.2px;width:15px;height:15px;border-radius:50%;background:#364152"></div>
<div class="t" style="left:1409px;top:765.2px;width:15px;text-align:center;font-size:7.5px;color:#d1d5db">2</div>
<div class="t" style="left:1431.5px;top:757.5px;font-size:10.8px;letter-spacing:0.3px;color:#e5e7eb">acme-us-east-1-dev</div>
<div class="t" style="left:1431.5px;top:771.1px;font-size:9.5px;color:#e04848">12% efficiency</div>
<div class="t" style="left:1683px;top:758.7px;text-align:right;font-size:10.3px;font-weight:700;letter-spacing:0.5px;color:#f3f4f6;width:147.5px">$7,206</div>
<div class="t" style="left:1683px;top:772.5px;text-align:right;font-size:8px;color:#6b7280;width:147.5px">/month</div>
<svg class="i" style="left:1837px;top:764.0px;width:10px;height:10px;color:#6b7280" viewBox="0 0 24 24"><path d="m9 18 6-6-6-6"/></svg>
<div class="row" style="top:797.5px"></div>
<div class="a" style="left:1409px;top:811.2px;width:15px;height:15px;border-radius:50%;background:#364152"></div>
<div class="t" style="left:1409px;top:815.2px;width:15px;text-align:center;font-size:7.5px;color:#d1d5db">3</div>
<div class="t" style="left:1431.5px;top:807.5px;font-size:10.8px;letter-spacing:0.3px;color:#e5e7eb">acme-us-east-1-ops</div>
<div class="t" style="left:1431.5px;top:821.1px;font-size:9.5px;color:#e04848">20% efficiency</div>
<div class="t" style="left:1683px;top:808.7px;text-align:right;font-size:10.3px;font-weight:700;letter-spacing:0.5px;color:#f3f4f6;width:147.5px">$2,588</div>
<div class="t" style="left:1683px;top:822.5px;text-align:right;font-size:8px;color:#6b7280;width:147.5px">/month</div>
<svg class="i" style="left:1837px;top:814.0px;width:10px;height:10px;color:#6b7280" viewBox="0 0 24 24"><path d="m9 18 6-6-6-6"/></svg>
<div class="row" style="top:847.5px"></div>
<div class="a" style="left:1409px;top:861.2px;width:15px;height:15px;border-radius:50%;background:#364152"></div>
<div class="t" style="left:1409px;top:865.2px;width:15px;text-align:center;font-size:7.5px;color:#d1d5db">4</div>
<div class="t" style="left:1431.5px;top:857.5px;font-size:10.8px;letter-spacing:0.3px;color:#e5e7eb">acme-eks-ops</div>
<div class="t" style="left:1431.5px;top:871.1px;font-size:9.5px;color:#e04848">12% efficiency</div>
<div class="t" style="left:1683px;top:858.7px;text-align:right;font-size:10.3px;font-weight:700;letter-spacing:0.5px;color:#f3f4f6;width:147.5px">$402</div>
<div class="t" style="left:1683px;top:872.5px;text-align:right;font-size:8px;color:#6b7280;width:147.5px">/month</div>
<svg class="i" style="left:1837px;top:864.0px;width:10px;height:10px;color:#6b7280" viewBox="0 0 24 24"><path d="m9 18 6-6-6-6"/></svg>

</div></body></html>
